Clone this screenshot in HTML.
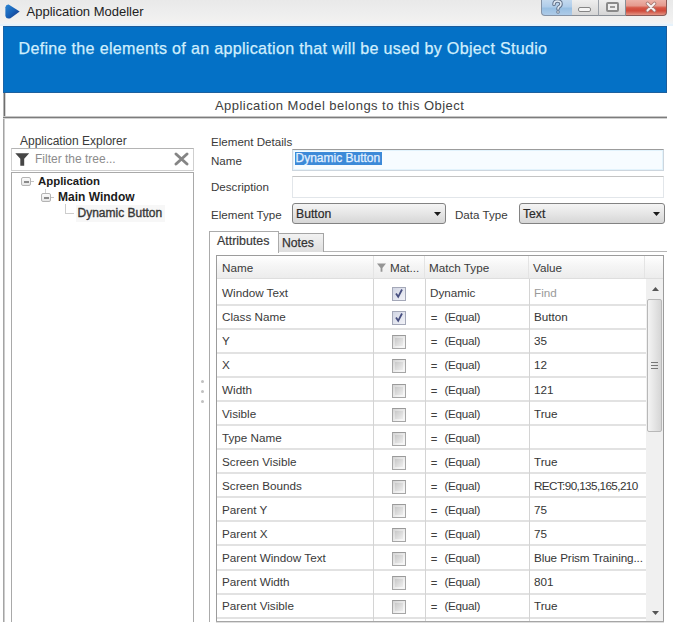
<!DOCTYPE html>
<html><head><meta charset="utf-8">
<style>
*{margin:0;padding:0;box-sizing:border-box}
html,body{width:673px;height:630px;overflow:hidden;background:#fff;font-family:"Liberation Sans",sans-serif;color:#333}
.a{position:absolute;white-space:nowrap}
.t{font-size:11.6px;line-height:14px;color:#3a3a3a}
.g{font-size:11.7px;line-height:14px;color:#3a3a3a}
.sb{-webkit-text-stroke:0.35px currentColor}
.cb{position:absolute;width:14px;height:14px;border:1px solid #a6a6a6;border-top-color:#9a9a9a;background:linear-gradient(135deg,#d4d4d4,#f6f6f6 80%);}
.cbi{position:absolute;left:2px;top:2px;width:8px;height:8px;background:linear-gradient(135deg,#c8c8c8,#eeeeee)}
</style></head><body>

<div class="a" style="left:0;top:0;width:673px;height:26px;background:linear-gradient(#e9e9e9,#eeeeee 50%,#f2f1f0 80%,#eef6fc)"></div>
<div class="a" style="left:0;top:24px;width:673px;height:2px;background:#e6f2fb"></div>
<svg class="a" style="left:3px;top:3px" width="18" height="17" viewBox="0 0 18 17"><defs><linearGradient id="ig" x1="0" y1="0" x2="1" y2="1"><stop offset="0" stop-color="#2c84d2"/><stop offset="0.5" stop-color="#1762b8"/><stop offset="1" stop-color="#1a2e78"/></linearGradient></defs><path d="M2.4 4.2 Q2.8 1.4 5.6 1.6 L16.7 8.6 L7.5 15.2 Q3.2 16.6 2.4 13 Z" fill="url(#ig)"/></svg>
<div class="a" style="left:26.5px;top:5px;font-size:13px;line-height:14px;color:#222">Application Modeller</div>
<div class="a" style="left:541px;top:0;width:32px;height:16px;background:linear-gradient(#c4d9ee,#b0cdea 45%,#98bfe2 55%,#aecbe8);border:1px solid #8593a6;border-top:none;border-radius:0 0 0 4px"></div>
<svg class="a" style="left:552px;top:0" width="11" height="14" viewBox="0 0 11 14"><path d="M2 4.5 Q2 1 5.5 1 Q9 1 9 4 Q9 6 6.8 7 Q6 7.5 6 9" stroke="#66768e" stroke-width="3.6" fill="none" stroke-linecap="round"/><path d="M2 4.5 Q2 1 5.5 1 Q9 1 9 4 Q9 6 6.8 7 Q6 7.5 6 9" stroke="#e4edf6" stroke-width="1.5" fill="none" stroke-linecap="round"/><circle cx="6" cy="12" r="1.8" fill="#6f7f95"/><circle cx="6" cy="12" r="0.8" fill="#f2f6fb"/></svg>
<div class="a" style="left:572px;top:0;width:27px;height:16px;background:linear-gradient(#eeeeee,#e2e2e2 50%,#d6d6d6);border:1px solid #8a8f96;border-top:none;border-left:none"></div>
<div class="a" style="left:578px;top:7px;width:13px;height:5px;border:1.5px solid #858585;background:#f4f4f4;border-radius:2px"></div>
<div class="a" style="left:598px;top:0;width:28px;height:16px;background:linear-gradient(#eeeeee,#e2e2e2 50%,#d6d6d6);border:1px solid #8a8f96;border-top:none;border-left:1px solid #9aa0a8"></div>
<div class="a" style="left:606px;top:2px;width:13px;height:10px;border:2px solid #8a8a8a;background:#eeeeee;border-radius:2px"></div>
<div class="a" style="left:610px;top:6px;width:5px;height:2px;background:#9a9a9a"></div>
<div class="a" style="left:626px;top:0;width:41px;height:16px;background:linear-gradient(#ecb2a8,#e59a8e 38%,#d65646 52%,#d04a3a 72%,#e39484);border:1px solid #8a5a56;border-top:none;border-left:none;border-radius:0 0 4px 0"></div>
<svg class="a" style="left:645px;top:1px" width="12" height="12" viewBox="0 0 12 12"><path d="M2.5 2.5 L9.5 9.5 M9.5 2.5 L2.5 9.5" stroke="#a87a74" stroke-width="3.6" stroke-linecap="round"/><path d="M2.5 2.5 L9.5 9.5 M9.5 2.5 L2.5 9.5" stroke="#f8f4f4" stroke-width="1.8" stroke-linecap="round"/></svg>
<div class="a" style="left:3px;top:26px;width:664px;height:67px;background:#0471c6;border-top:1px solid #1b5c9c;border-bottom:1px solid #1d609e;border-right:1px solid #1a5c9c;border-left:1px solid #1a64a8"></div>
<div class="a" style="left:18.5px;top:39px;font-size:16.1px;line-height:18px;letter-spacing:0.3px;color:#d0eefd;-webkit-text-stroke:0.25px #d0eefd">Define the elements of an application that will be used by Object Studio</div>
<div class="a" style="left:3px;top:93px;width:664px;height:26px;background:#fff"></div>
<div class="a" style="left:3px;top:93px;width:1px;height:24px;background:#b4b4b4"></div>
<div class="a" style="left:4px;top:93px;width:1px;height:24px;background:#6e6e6e"></div>
<div class="a" style="left:5px;top:93px;width:1px;height:24px;background:#d4d4d4"></div>
<div class="a" style="left:3px;top:116px;width:664px;height:1px;background:#c6c6c6"></div>
<div class="a" style="left:3px;top:117px;width:664px;height:1px;background:#7c7c7c"></div>
<div class="a" style="left:3px;top:118px;width:664px;height:1px;background:#d2d2d2"></div>
<div class="a" style="left:215px;top:97.5px;font-size:13px;line-height:16px;letter-spacing:0.45px;color:#404040">Application Model belongs to this Object</div>
<div class="a" style="left:3px;top:119px;width:1px;height:503px;background:#a4a4a4"></div><div class="a" style="left:4px;top:119px;width:1px;height:503px;background:#cdcdcd"></div>
<div class="a t" style="left:20px;top:134px;font-size:12px">Application Explorer</div>
<div class="a" style="left:11px;top:148px;width:183px;height:23px;border:1px solid #cfcfcf;border-top-color:#b4b4b4;background:#fff"></div>
<svg class="a" style="left:15px;top:153px" width="15" height="13" viewBox="0 0 15 13"><path d="M0.3 0.3 H14.2 L9.2 5.8 V12.8 H5.3 V5.8 Z" fill="#464646"/></svg>
<div class="a t" style="left:35px;top:152px;font-size:12px;color:#8c8c8c">Filter the tree...</div>
<svg class="a" style="left:174px;top:152px" width="15" height="14" viewBox="0 0 15 14"><path d="M2 2 L13 12 M13 2 L2 12" stroke="#858585" stroke-width="2.9" stroke-linecap="round"/></svg>
<div class="a" style="left:11px;top:172px;width:183px;height:450px;border:1px solid #a9a9a9;border-bottom:none;background:#fff"></div>
<div class="a" style="left:21px;top:177px;width:10px;height:9px;border:1.5px solid #b4b4b4;border-radius:2px;background:linear-gradient(#fafafa,#e6e6e6)"></div><div class="a" style="left:23.5px;top:180.5px;width:5px;height:2px;background:#8a8a8a"></div>
<div class="a" style="left:31px;top:181px;width:3px;height:1px;background:#c4c4c4"></div>
<div class="a" style="left:38px;top:175px;font-size:11.4px;line-height:12px;font-weight:bold;color:#1a1a1a">Application</div>
<div class="a" style="left:41px;top:193px;width:10px;height:9px;border:1.5px solid #b4b4b4;border-radius:2px;background:linear-gradient(#fafafa,#e6e6e6)"></div><div class="a" style="left:43.5px;top:196.5px;width:5px;height:2px;background:#8a8a8a"></div>
<div class="a" style="left:51px;top:197px;width:3px;height:1px;background:#c4c4c4"></div><div class="a" style="left:45px;top:189px;width:1px;height:4px;background:#d0d0d0"></div>
<div class="a" style="left:58px;top:191px;font-size:12px;line-height:12px;font-weight:bold;color:#1a1a1a">Main Window</div>
<div class="a" style="left:65px;top:204px;width:9px;height:10px;border-left:1px solid #cdcdcd;border-bottom:1px solid #cdcdcd"></div>
<div class="a" style="left:76px;top:205px;width:89px;height:17px;background:#f7f7f7"></div>
<div class="a sb" style="left:77.5px;top:207px;font-size:12px;line-height:12px;color:#383838">Dynamic Button</div>
<div class="a t" style="left:211px;top:135px">Element Details</div>
<div class="a t" style="left:211px;top:154px">Name</div>
<div class="a" style="left:292px;top:149px;width:372px;height:22px;border:1px solid #cdd6de;border-top-color:#9c9c9c;background:#f7fcff;box-shadow:inset 0 0 0 1px #e2f3fc"></div>
<div class="a" style="left:295px;top:152px;width:87px;height:13px;background:#3c8ad8"></div>
<div class="a sb" style="left:295.5px;top:152px;font-size:12px;line-height:13px;color:#e2f0ff;-webkit-text-stroke:0.25px #e2f0ff">Dynamic Button</div>
<div class="a t" style="left:211px;top:180px">Description</div>
<div class="a" style="left:292px;top:176px;width:372px;height:22px;border:1px solid #e2e6ea;border-top-color:#c4c4c4;background:#fff"></div>
<div class="a t" style="left:211px;top:208px">Element Type</div>
<div class="a" style="left:292px;top:203px;width:154px;height:21px;border:1px solid #828282;border-radius:3px;background:linear-gradient(#f4f4f4,#e6e6e6 50%,#d6d6d6)"></div>
<div class="a" style="left:296px;top:208px;font-size:12.2px;line-height:12px;color:#2a2a2a;-webkit-text-stroke:0.2px #2a2a2a">Button</div>
<svg class="a" style="left:433.5px;top:211.5px" width="7" height="4" viewBox="0 0 7 4"><path d="M0 0 H7 L3.5 4 Z" fill="#1a1a1a"/></svg>
<div class="a t" style="left:455px;top:208px">Data Type</div>
<div class="a" style="left:519px;top:203px;width:146px;height:21px;border:1px solid #828282;border-radius:3px;background:linear-gradient(#f4f4f4,#e6e6e6 50%,#d6d6d6)"></div>
<div class="a" style="left:523px;top:208px;font-size:12.2px;line-height:12px;color:#2a2a2a;-webkit-text-stroke:0.2px #2a2a2a">Text</div>
<svg class="a" style="left:652.5px;top:211.5px" width="7" height="4" viewBox="0 0 7 4"><path d="M0 0 H7 L3.5 4 Z" fill="#1a1a1a"/></svg>
<div class="a" style="left:209px;top:251px;width:458px;height:371px;border-left:1px solid #ababab;border-top:1px solid #b5b5b5;background:#fff"></div>
<div class="a" style="left:278px;top:233px;width:46px;height:19px;border:1px solid #a4a4a4;border-bottom:none;background:linear-gradient(#f2f2f2,#dedede)"></div>
<div class="a sb" style="left:282px;top:237px;font-size:12.2px;line-height:12px;color:#333;-webkit-text-stroke:0.25px #333">Notes</div>
<div class="a" style="left:209px;top:231px;width:70px;height:22px;border:1px solid #ababab;border-bottom:none;background:#fff"></div>
<div class="a t" style="left:217px;top:234px;font-size:12.4px;-webkit-text-stroke:0.2px #383838">Attributes</div>
<div class="a" style="left:216px;top:255px;width:448px;height:367px;border:1px solid #9c9c9c;border-bottom:none;background:#fff"></div>
<div class="a" style="left:216px;top:621px;width:448px;height:1px;background:#a6a6a6"></div><div class="a" style="left:216px;top:622px;width:448px;height:1px;background:#dedede"></div>
<div class="a" style="left:217px;top:256px;width:446px;height:22px;background:linear-gradient(#ffffff,#f6f6f6 40%,#ececec)"></div>
<div class="a" style="left:217px;top:278px;width:446px;height:1px;background:#dedede"></div>
<div class="a" style="left:373px;top:256px;width:1px;height:22px;background:#e4e4e4"></div>
<div class="a" style="left:424px;top:256px;width:1px;height:22px;background:#e4e4e4"></div>
<div class="a" style="left:528px;top:256px;width:1px;height:22px;background:#e4e4e4"></div>
<div class="a" style="left:644px;top:256px;width:1px;height:22px;background:#e4e4e4"></div>
<div class="a g" style="left:222px;top:261px">Name</div>
<svg class="a" style="left:377px;top:263px" width="9" height="9" viewBox="0 0 9 9"><path d="M0 0.5 H9 L5.4 5 V8.8 H3.6 V5 Z" fill="#959595"/></svg>
<div class="a g" style="left:390px;top:261px">Mat...</div>
<div class="a g" style="left:429px;top:261px">Match Type</div>
<div class="a g" style="left:533px;top:261px">Value</div>
<div class="a g" style="left:222px;top:285.5px">Window Text</div>
<div class="cb" style="left:391.5px;top:286.5px;border-color:#a4a8b8;background:linear-gradient(135deg,#d2d6e4,#f2f3f8)"></div>
<svg class="a" style="left:394px;top:287.5px" width="10" height="11" viewBox="0 0 10 11"><path d="M2 5.5 L4.2 8.8 L8 1.5" stroke="#474f80" stroke-width="1.8" fill="none"/></svg>
<div class="a g" style="left:430px;top:285.5px">Dynamic</div>
<div class="a g" style="left:534px;top:285.5px;color:#9a9a9a">Find</div>
<div class="a" style="left:217px;top:304px;width:429px;height:2px;background:#e2e2e2"></div>
<div class="a g" style="left:222px;top:309.5px">Class Name</div>
<div class="cb" style="left:391.5px;top:310.5px;border-color:#a4a8b8;background:linear-gradient(135deg,#d2d6e4,#f2f3f8)"></div>
<svg class="a" style="left:394px;top:311.5px" width="10" height="11" viewBox="0 0 10 11"><path d="M2 5.5 L4.2 8.8 L8 1.5" stroke="#474f80" stroke-width="1.8" fill="none"/></svg>
<div class="a g" style="left:431px;top:310.5px;font-size:10.5px;-webkit-text-stroke:0.3px #444">=</div>
<div class="a g" style="left:444.5px;top:309.5px;letter-spacing:-0.3px">(Equal)</div>
<div class="a g" style="left:534px;top:309.5px;color:#353535">Button</div>
<div class="a" style="left:217px;top:328px;width:429px;height:2px;background:#e2e2e2"></div>
<div class="a g" style="left:222px;top:333.5px">Y</div>
<div class="cb" style="left:391.5px;top:334.5px"><div class="cbi"></div></div>
<div class="a g" style="left:431px;top:334.5px;font-size:10.5px;-webkit-text-stroke:0.3px #444">=</div>
<div class="a g" style="left:444.5px;top:333.5px;letter-spacing:-0.3px">(Equal)</div>
<div class="a g" style="left:534px;top:333.5px;color:#353535">35</div>
<div class="a" style="left:217px;top:352px;width:429px;height:2px;background:#e2e2e2"></div>
<div class="a g" style="left:222px;top:357.5px">X</div>
<div class="cb" style="left:391.5px;top:358.5px"><div class="cbi"></div></div>
<div class="a g" style="left:431px;top:358.5px;font-size:10.5px;-webkit-text-stroke:0.3px #444">=</div>
<div class="a g" style="left:444.5px;top:357.5px;letter-spacing:-0.3px">(Equal)</div>
<div class="a g" style="left:534px;top:357.5px;color:#353535">12</div>
<div class="a" style="left:217px;top:376px;width:429px;height:2px;background:#e2e2e2"></div>
<div class="a g" style="left:222px;top:382.5px">Width</div>
<div class="cb" style="left:391.5px;top:383.5px"><div class="cbi"></div></div>
<div class="a g" style="left:431px;top:383.5px;font-size:10.5px;-webkit-text-stroke:0.3px #444">=</div>
<div class="a g" style="left:444.5px;top:382.5px;letter-spacing:-0.3px">(Equal)</div>
<div class="a g" style="left:534px;top:382.5px;color:#353535">121</div>
<div class="a" style="left:217px;top:400px;width:429px;height:2px;background:#e2e2e2"></div>
<div class="a g" style="left:222px;top:406.5px">Visible</div>
<div class="cb" style="left:391.5px;top:407.5px"><div class="cbi"></div></div>
<div class="a g" style="left:431px;top:407.5px;font-size:10.5px;-webkit-text-stroke:0.3px #444">=</div>
<div class="a g" style="left:444.5px;top:406.5px;letter-spacing:-0.3px">(Equal)</div>
<div class="a g" style="left:534px;top:406.5px;color:#353535">True</div>
<div class="a" style="left:217px;top:424px;width:429px;height:2px;background:#e2e2e2"></div>
<div class="a g" style="left:222px;top:430.5px">Type Name</div>
<div class="cb" style="left:391.5px;top:431.5px"><div class="cbi"></div></div>
<div class="a g" style="left:431px;top:431.5px;font-size:10.5px;-webkit-text-stroke:0.3px #444">=</div>
<div class="a g" style="left:444.5px;top:430.5px;letter-spacing:-0.3px">(Equal)</div>
<div class="a" style="left:217px;top:448px;width:429px;height:2px;background:#e2e2e2"></div>
<div class="a g" style="left:222px;top:454.5px">Screen Visible</div>
<div class="cb" style="left:391.5px;top:455.5px"><div class="cbi"></div></div>
<div class="a g" style="left:431px;top:455.5px;font-size:10.5px;-webkit-text-stroke:0.3px #444">=</div>
<div class="a g" style="left:444.5px;top:454.5px;letter-spacing:-0.3px">(Equal)</div>
<div class="a g" style="left:534px;top:454.5px;color:#353535">True</div>
<div class="a" style="left:217px;top:472px;width:429px;height:2px;background:#e2e2e2"></div>
<div class="a g" style="left:222px;top:478.5px">Screen Bounds</div>
<div class="cb" style="left:391.5px;top:479.5px"><div class="cbi"></div></div>
<div class="a g" style="left:431px;top:479.5px;font-size:10.5px;-webkit-text-stroke:0.3px #444">=</div>
<div class="a g" style="left:444.5px;top:478.5px;letter-spacing:-0.3px">(Equal)</div>
<div class="a g" style="left:534px;top:478.5px;color:#353535;letter-spacing:-0.6px">RECT:90,135,165,210</div>
<div class="a" style="left:217px;top:496px;width:429px;height:2px;background:#e2e2e2"></div>
<div class="a g" style="left:222px;top:502.5px">Parent Y</div>
<div class="cb" style="left:391.5px;top:503.5px"><div class="cbi"></div></div>
<div class="a g" style="left:431px;top:503.5px;font-size:10.5px;-webkit-text-stroke:0.3px #444">=</div>
<div class="a g" style="left:444.5px;top:502.5px;letter-spacing:-0.3px">(Equal)</div>
<div class="a g" style="left:534px;top:502.5px;color:#353535">75</div>
<div class="a" style="left:217px;top:520px;width:429px;height:2px;background:#e2e2e2"></div>
<div class="a g" style="left:222px;top:526.5px">Parent X</div>
<div class="cb" style="left:391.5px;top:527.5px"><div class="cbi"></div></div>
<div class="a g" style="left:431px;top:527.5px;font-size:10.5px;-webkit-text-stroke:0.3px #444">=</div>
<div class="a g" style="left:444.5px;top:526.5px;letter-spacing:-0.3px">(Equal)</div>
<div class="a g" style="left:534px;top:526.5px;color:#353535">75</div>
<div class="a" style="left:217px;top:544px;width:429px;height:2px;background:#e2e2e2"></div>
<div class="a g" style="left:222px;top:550.5px">Parent Window Text</div>
<div class="cb" style="left:391.5px;top:551.5px"><div class="cbi"></div></div>
<div class="a g" style="left:431px;top:551.5px;font-size:10.5px;-webkit-text-stroke:0.3px #444">=</div>
<div class="a g" style="left:444.5px;top:550.5px;letter-spacing:-0.3px">(Equal)</div>
<div class="a g" style="left:534px;top:550.5px;color:#353535;letter-spacing:-0.1px">Blue Prism Training...</div>
<div class="a" style="left:217px;top:569px;width:429px;height:2px;background:#e2e2e2"></div>
<div class="a g" style="left:222px;top:574.5px">Parent Width</div>
<div class="cb" style="left:391.5px;top:575.5px"><div class="cbi"></div></div>
<div class="a g" style="left:431px;top:575.5px;font-size:10.5px;-webkit-text-stroke:0.3px #444">=</div>
<div class="a g" style="left:444.5px;top:574.5px;letter-spacing:-0.3px">(Equal)</div>
<div class="a g" style="left:534px;top:574.5px;color:#353535">801</div>
<div class="a" style="left:217px;top:593px;width:429px;height:2px;background:#e2e2e2"></div>
<div class="a g" style="left:222px;top:598.5px">Parent Visible</div>
<div class="cb" style="left:391.5px;top:599.5px"><div class="cbi"></div></div>
<div class="a g" style="left:431px;top:599.5px;font-size:10.5px;-webkit-text-stroke:0.3px #444">=</div>
<div class="a g" style="left:444.5px;top:598.5px;letter-spacing:-0.3px">(Equal)</div>
<div class="a g" style="left:534px;top:598.5px;color:#353535">True</div>
<div class="a" style="left:217px;top:617px;width:429px;height:2px;background:#e2e2e2"></div>
<div class="a" style="left:373px;top:279px;width:1px;height:342px;background:#d4d4d4"></div>
<div class="a" style="left:425px;top:279px;width:1px;height:342px;background:#d4d4d4"></div>
<div class="a" style="left:529px;top:279px;width:1px;height:342px;background:#d4d4d4"></div>
<div class="a" style="left:646px;top:279px;width:17px;height:342px;background:#f0f0f0"></div>
<svg class="a" style="left:652px;top:287px" width="7" height="4" viewBox="0 0 7 4"><path d="M0 4 L3.5 0 L7 4 Z" fill="#555"/></svg>
<div class="a" style="left:647px;top:299px;width:15px;height:133px;border:1px solid #b8b8b8;border-radius:2px;background:linear-gradient(90deg,#f4f4f4,#e2e2e2 60%,#d6d6d6)"></div>
<div class="a" style="left:651px;top:362px;width:7px;height:1px;background:#777"></div>
<div class="a" style="left:651px;top:365px;width:7px;height:1px;background:#777"></div>
<div class="a" style="left:651px;top:368px;width:7px;height:1px;background:#777"></div>
<svg class="a" style="left:652px;top:611px" width="7" height="4" viewBox="0 0 7 4"><path d="M0 0 L3.5 4 L7 0 Z" fill="#555"/></svg>
<div class="a" style="left:200.5px;top:380px;width:3px;height:3px;border-radius:1.5px;background:#c0c0c0"></div>
<div class="a" style="left:200.5px;top:390px;width:3px;height:3px;border-radius:1.5px;background:#c0c0c0"></div>
<div class="a" style="left:200.5px;top:400px;width:3px;height:3px;border-radius:1.5px;background:#c0c0c0"></div>
</body></html>
